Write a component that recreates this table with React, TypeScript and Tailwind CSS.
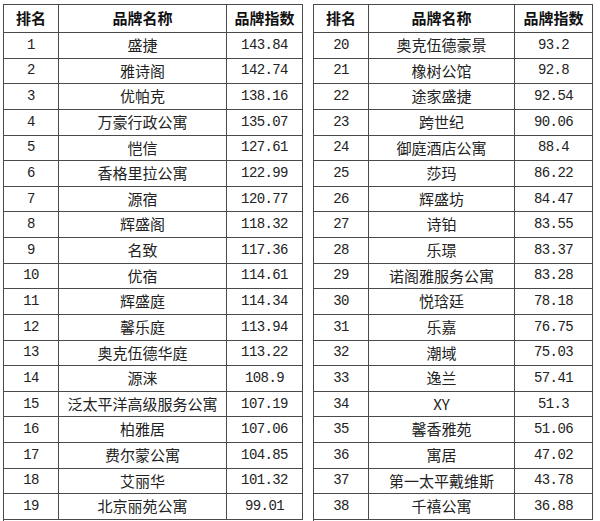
import React from "react";

type Row = [string, string, string];

const left: Row[] = [
  ["1", "盛捷", "143.84"],
  ["2", "雅诗阁", "142.74"],
  ["3", "优帕克", "138.16"],
  ["4", "万豪行政公寓", "135.07"],
  ["5", "恺信", "127.61"],
  ["6", "香格里拉公寓", "122.99"],
  ["7", "源宿", "120.77"],
  ["8", "辉盛阁", "118.32"],
  ["9", "名致", "117.36"],
  ["10", "优宿", "114.61"],
  ["11", "辉盛庭", "114.34"],
  ["12", "馨乐庭", "113.94"],
  ["13", "奥克伍德华庭", "113.22"],
  ["14", "源涞", "108.9"],
  ["15", "泛太平洋高级服务公寓", "107.19"],
  ["16", "柏雅居", "107.06"],
  ["17", "费尔蒙公寓", "104.85"],
  ["18", "艾丽华", "101.32"],
  ["19", "北京丽苑公寓", "99.01"],
];

const right: Row[] = [
  ["20", "奥克伍德豪景", "93.2"],
  ["21", "橡树公馆", "92.8"],
  ["22", "途家盛捷", "92.54"],
  ["23", "跨世纪", "90.06"],
  ["24", "御庭酒店公寓", "88.4"],
  ["25", "莎玛", "86.22"],
  ["26", "辉盛坊", "84.47"],
  ["27", "诗铂", "83.55"],
  ["28", "乐璟", "83.37"],
  ["29", "诺阁雅服务公寓", "83.28"],
  ["30", "悦琀廷", "78.18"],
  ["31", "乐嘉", "76.75"],
  ["32", "潮域", "75.03"],
  ["33", "逸兰", "57.41"],
  ["34", "XY", "51.3"],
  ["35", "馨香雅苑", "51.06"],
  ["36", "寓居", "47.02"],
  ["37", "第一太平戴维斯", "43.78"],
  ["38", "千禧公寓", "36.88"],
];

const cjk = { fontFamily: '"Noto Sans CJK SC", "Noto Sans", sans-serif' };
const mono = { fontFamily: '"Liberation Mono", "DejaVu Sans Mono", monospace' };

function Table({ rows, widths }: { rows: Row[]; widths: [string, string, string] }) {
  const [w1, w2, w3] = widths;
  return (
    <div className="flex flex-col border-l border-t border-[#4a4a4a]">
      <div className="flex h-[28px] font-bold text-[15px] text-[#111]" style={cjk}>
        <div className={`${w1} flex items-center justify-center border-r border-b border-[#4a4a4a]`}>排名</div>
        <div className={`${w2} flex items-center justify-center border-r border-b border-[#4a4a4a]`}>品牌名称</div>
        <div className={`${w3} flex items-center justify-center border-r border-b border-[#4a4a4a]`}>品牌指数</div>
      </div>
      {rows.map((r) => (
        <div key={r[0]} className="flex h-[25.63px] text-[#222]">
          <div className={`${w1} flex items-center justify-center border-r border-b border-[#4a4a4a] text-[14px] tracking-[-0.6px]`} style={mono}>
            {r[0]}
          </div>
          <div className={`${w2} flex items-center justify-center border-r border-b border-[#4a4a4a] text-[15px]`} style={cjk}>
            {r[1]}
          </div>
          <div className={`${w3} flex items-center justify-center border-r border-b border-[#4a4a4a] text-[14px] tracking-[-0.6px]`} style={mono}>
            {r[2]}
          </div>
        </div>
      ))}
    </div>
  );
}

export default function App() {
  return (
    <div className="w-[600px] h-[521px] bg-white pt-[4px] pl-[3px] flex gap-[10px] overflow-hidden">
      <Table rows={left} widths={["w-[55px]", "w-[168px]", "w-[76px]"]} />
      <Table rows={right} widths={["w-[55px]", "w-[146px]", "w-[78px]"]} />
    </div>
  );
}
